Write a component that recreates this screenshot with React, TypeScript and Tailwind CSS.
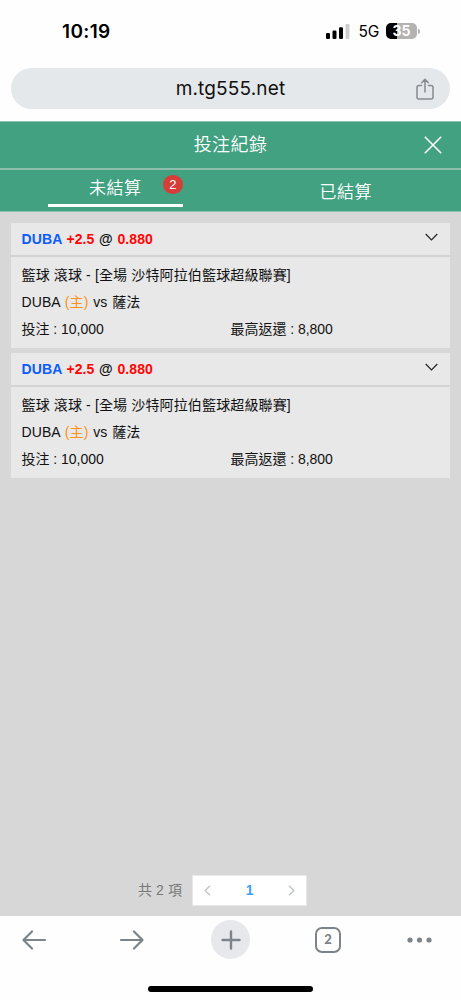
import { useState } from "react";

type Bet = {
  id: number;
  team: string;
  handicap: string;
  odds: string;
  league: string;
  away: string;
  stake: string;
  maxReturn: string;
};

const bets: Bet[] = [1, 2].map((id) => ({
  id,
  team: "DUBA",
  handicap: "+2.5",
  odds: "0.880",
  league: "籃球 滾球 - [全場 沙特阿拉伯籃球超級聯賽]",
  away: "薩法",
  stake: "10,000",
  maxReturn: "8,800",
}));

const StatusBar = () => (
  <div className="flex h-[68px] shrink-0 items-start justify-between pl-[62px] pr-[41px] font-['Inter',sans-serif] text-black">
    <span className="mt-[20px] text-[19px] leading-6 font-semibold tracking-[0.35px]">10:19</span>
    <div className="mt-[19px] flex h-6 items-center">
      <svg width="24" height="15" viewBox="0 0 24 15" className="mr-[8px]">
        <rect x="0" y="9" width="4" height="6" rx="1.2" />
        <rect x="6.5" y="6.5" width="4" height="8.5" rx="1.2" />
        <rect x="13" y="3.3" width="4" height="11.7" rx="1.2" />
        <rect x="19.5" y="0" width="4" height="15" rx="1.2" fill="#cdcdcd" />
      </svg>
      <span className="mt-[2px] mr-[7px] text-[15.5px] leading-6 tracking-[-0.2px]">5G</span>
      <div className="flex h-4 w-[31px] items-center justify-center rounded-[5px] bg-linear-to-r from-black from-35% to-[#b3b3b3] to-35% text-[14px] leading-4 font-bold text-white">
        35
      </div>
      <div className="ml-px h-[5px] w-[2px] rounded-r-full bg-[#b3b3b3]" />
    </div>
  </div>
);

const AddressBar = () => (
  <div className="mx-[11px] mb-3 grid h-[41px] shrink-0 grid-cols-[1fr_auto_1fr] items-center rounded-full bg-[#e5e8eb] font-['Inter',sans-serif]">
    <span />
    <span className="text-[19px] leading-6 tracking-[0.15px] text-[#111]">m.tg555.net</span>
    <button className="mr-[16px] justify-self-end" title="Share">
      <svg
        width="18"
        height="22"
        viewBox="0 0 18 22"
        fill="none"
        stroke="#848a8e"
        strokeWidth="1.5"
        strokeLinecap="round"
        strokeLinejoin="round"
      >
        <path d="M5.5 7.5H3a2 2 0 0 0-2 2V19a2 2 0 0 0 2 2h12a2 2 0 0 0 2-2V9.5a2 2 0 0 0-2-2h-2.5M9 14V1.5M5.700 4.700 9 1.300l3.300 3.400" />
      </svg>
    </button>
  </div>
);

const Header = ({ tab, onTab }: { tab: number; onTab: (tab: number) => void }) => (
  <header className="shrink-0 border-y border-[#8cc3ae] bg-[#41a181] text-white">
    <div className="grid h-[48px] grid-cols-[1fr_auto_1fr] items-center border-b-2 border-[#8ebfac]">
      <span />
      <h1 className="text-[18px] leading-6 font-[350] tracking-[0.4px]">投注紀錄</h1>
      <button className="mr-[19px] justify-self-end" title="Close">
        <svg width="18" height="18" viewBox="0 0 18 18" fill="none" stroke="currentColor" strokeWidth="1.6">
          <path d="m.8.8 16.400 16.400M17.200.8.8 17.200" />
        </svg>
      </button>
    </div>
    <nav className="grid h-[41px] grid-cols-2 text-[17px] leading-6 font-[350] tracking-[0.5px]">
      <button className="relative mx-auto h-[37px] w-[135px] border-b-3 border-white pt-[4px]" onClick={() => onTab(0)}>
        未結算
        <span className="absolute top-[5px] right-0 flex h-[19px] w-5 items-center justify-center rounded-full bg-[#d63d38] text-[13px] leading-none font-normal tracking-normal">
          {bets.length}
        </span>
      </button>
      <button className="pt-[4px]" onClick={() => onTab(1)} aria-pressed={tab === 1}>
        已結算
      </button>
    </nav>
  </header>
);

const BetCard = ({ bet }: { bet: Bet }) => {
  const [opened, setOpened] = useState(true);

  return (
    <article className="bg-[#e8e8e8] text-[14px] leading-[27px] tracking-[0.1px] text-[#111]">
      <button
        className="flex h-[34px] w-full items-center justify-between border-b-2 border-[#d3d3d3] pr-[12px] pl-[10.5px] text-left font-bold"
        onClick={() => setOpened(!opened)}
      >
        <span className="[word-spacing:0.6px]">
          <span className="text-[#0d5cff]">{bet.team}</span> <span className="text-[#ff0505]">{bet.handicap}</span> @{" "}
          <span className="text-[#ff0505]">{bet.odds}</span>
        </span>
        <svg width="13" height="8" viewBox="0 0 13 8" fill="none" stroke="#222" strokeWidth="1.2" className="mb-[5px]">
          <path d="m.7 1 5.800 5.800L12.300 1" />
        </svg>
      </button>
      {opened && (
        <div className="h-[91px] px-[10.5px] pt-[5px]">
          <p className="tracking-[0.14px]">{bet.league}</p>
          <p className="[word-spacing:0.8px]">
            DUBA <span className="text-[#ff9118]">(主)</span> vs {bet.away}
          </p>
          <p className="grid grid-cols-2 tracking-[-0.03px]">
            <span>投注 : {bet.stake}</span>
            <span>最高返還 : {bet.maxReturn}</span>
          </p>
        </div>
      )}
    </article>
  );
};

const Pagination = () => (
  <div className="mt-auto mb-[10px] flex items-center pl-[138px] text-[14px] text-[#777]">
    <span className="mr-[10px] tracking-[0.1px]">共 2 項</span>
    <div className="flex h-[31px] w-[115px] items-center justify-between border border-[#e8e8e8] bg-white px-[11px]">
      <svg width="7" height="11" viewBox="0 0 7 11" fill="none" stroke="#c0c4cc" strokeWidth="1.4">
        <path d="M6 .7 1.200 5.500 6 10.300" />
      </svg>
      <span className="font-bold text-[#409eff]">1</span>
      <svg width="7" height="11" viewBox="0 0 7 11" fill="none" stroke="#c0c4cc" strokeWidth="1.4">
        <path d="m1 .7 4.800 4.800L1 10.300" />
      </svg>
    </div>
  </div>
);

const BrowserToolbar = () => (
  <footer className="flex h-[84px] shrink-0 flex-col items-center justify-between bg-[#fefefe] pb-[8px]">
    <div className="mt-[4px] flex h-[39px] w-full items-center pl-[21px] text-[#7c8489]">
      <svg width="26" height="20" viewBox="0 0 26 20" fill="none" stroke="currentColor" strokeWidth="2.2" strokeLinecap="round" strokeLinejoin="round">
        <path d="M24 10H2.500M11 1.500 2.500 10l8.500 8.500" />
      </svg>
      <svg width="26" height="20" viewBox="0 0 26 20" fill="none" stroke="currentColor" strokeWidth="2.2" strokeLinecap="round" strokeLinejoin="round" className="ml-[72px]">
        <path d="M2 10h21.500M15 1.500l8.500 8.500-8.500 8.500" />
      </svg>
      <div className="ml-[66px] flex size-[39px] items-center justify-center rounded-full bg-[#e7e8ec]">
        <svg width="20" height="20" viewBox="0 0 20 20" fill="none" stroke="currentColor" strokeWidth="2.4" strokeLinecap="round">
          <path d="M10 1.500v17M1.500 10h17" />
        </svg>
      </div>
      <div className="ml-[65px] flex size-[26px] items-center justify-center rounded-[7px] border-2 border-current font-['Lato',sans-serif] text-[13px] leading-none font-black">
        2
      </div>
      <svg width="25" height="6" viewBox="0 0 25 6" fill="currentColor" className="ml-[66px]">
        <circle cx="3" cy="3" r="2.6" />
        <circle cx="12.5" cy="3" r="2.6" />
        <circle cx="22" cy="3" r="2.6" />
      </svg>
    </div>
    <div className="h-[6px] w-[165px] rounded-full bg-black" />
  </footer>
);

const App = () => {
  const [tab, setTab] = useState(0);

  return (
    <div className="flex h-[1000px] w-[461px] flex-col overflow-hidden bg-[#fefefe] font-['Liberation_Sans','Noto_Sans_CJK_TC',sans-serif]">
      <StatusBar />
      <AddressBar />
      <Header tab={tab} onTab={setTab} />
      <main className="flex flex-1 flex-col bg-[#d7d7d7]">
        <div className="flex flex-col gap-[5px] px-[11px] pt-[11px]">
          {tab === 0 && bets.map((bet) => <BetCard key={bet.id} bet={bet} />)}
        </div>
        <Pagination />
      </main>
      <BrowserToolbar />
    </div>
  );
};

export default App;
